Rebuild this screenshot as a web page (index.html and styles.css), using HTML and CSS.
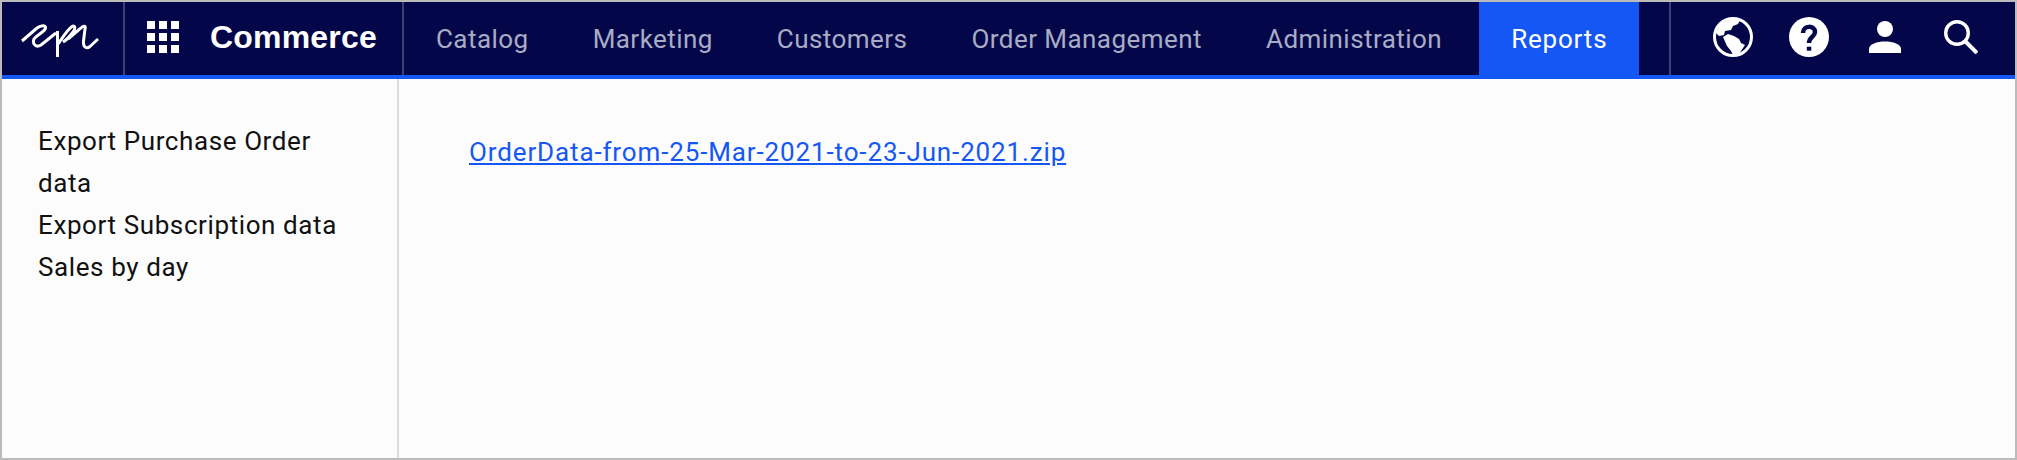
FILE: index.html
```html
<!DOCTYPE html>
<html lang="en">
<head>
    <meta charset="UTF-8">
    <title>Commerce - Reports</title>
    <link rel="stylesheet" href="styles.css">
</head>
<body>
    <div class="frame">
        <header class="topbar">
            <a class="logo-cell" href="#">
                <svg width="78" height="34" viewBox="0 0 78 34">
                    <path d="M1 17 L16 4 C20 1 25 1 24.5 4 C24 8 15 11 13 15 C11 20 15 24 20 21 L35 9 M36.5 7 V33 M37 20 C42 13 47 5 51 2.5 C54 1 55 4 52 8 C49 12 46 16 42 18 M47 15 L60 4 C63 1 65 2 64 5 L62.5 17 C62 24 66 25 69 22.5 L77 15" fill="none" stroke="#fff" stroke-width="3"/>
                </svg>
            </a>
            <div class="app-cell">
                <div class="app-grid">
                    <span></span><span></span><span></span>
                    <span></span><span></span><span></span>
                    <span></span><span></span><span></span>
                </div>
                <span class="app-name">Commerce</span>
            </div>
            <nav class="main-nav">
                <a href="#">Catalog</a>
                <a href="#">Marketing</a>
                <a href="#">Customers</a>
                <a href="#">Order Management</a>
                <a href="#">Administration</a>
                <a href="#" class="active">Reports</a>
            </nav>
            <div class="tools">
                <a class="tool" href="#">
                    <svg width="40" height="40" viewBox="0 0 40 40">
                        <circle cx="20" cy="20" r="18.5" fill="none" stroke="#fff" stroke-width="3"/>
                        <path d="M3 16 L7 7 L18 2 L27 3 L25 7 L20 9 L18 13 L12 14 L11 18 L6 19 Z" fill="#fff"/>
                        <path d="M10 20 L15 17 L21 19 L26 22 L28 26 L32 28 L28 34 L26 37 L20 38 L18 34 L14 29 Z" fill="#fff"/>
                    </svg>
                </a>
                <a class="tool" href="#">
                    <svg width="40" height="40" viewBox="0 0 40 40">
                        <circle cx="20" cy="20" r="20" fill="#fff"/>
                        <path d="M14 16 C14 8 26 8 26 15 C26 20 20 20 20 26" fill="none" stroke="#03074a" stroke-width="4.5"/>
                        <rect x="17.8" y="29.7" width="4.5" height="4" fill="#03074a"/>
                    </svg>
                </a>
                <a class="tool" href="#">
                    <svg width="32" height="32" viewBox="0 0 32 32">
                        <circle cx="16" cy="8" r="8" fill="#fff"/>
                        <path d="M0 32 V28 C0 23 8 20.5 16 20.5 C24 20.5 32 23 32 28 V32 Z" fill="#fff"/>
                    </svg>
                </a>
                <a class="tool" href="#">
                    <svg width="34" height="34" viewBox="0 0 34 34">
                        <circle cx="13" cy="13" r="11.3" fill="none" stroke="#fff" stroke-width="3.4"/>
                        <path d="M21 21 L33 33" fill="none" stroke="#fff" stroke-width="4"/>
                    </svg>
                </a>
            </div>
        </header>
        <div class="content">
            <aside class="sidebar">
                <a href="#">Export Purchase Order data</a>
                <a href="#">Export Subscription data</a>
                <a href="#">Sales by day</a>
            </aside>
            <main class="main">
                <a class="file-link" href="#">OrderData-from-25-Mar-2021-to-23-Jun-2021.zip</a>
            </main>
        </div>
    </div>
</body>
</html>
```

FILE: styles.css
```css
html, body {
    height: 100%;
}
body {
    margin: 0;
    font-family: 'Roboto', sans-serif;
    background-color: #fcfcfc;
}
a {
    text-decoration: none;
    color: inherit;
}
.frame {
    height: 100%;
    box-sizing: border-box;
    border: 2px solid #bbb;
    display: flex;
    flex-direction: column;
}
.topbar {
    height: 73px;
    flex: none;
    display: flex;
    background-color: #03074a;
    border-bottom: 4px solid #1557f5;
    box-sizing: content-box;
}
.logo-cell {
    width: 123px;
    box-sizing: border-box;
    border-right: 2px solid #3b3f72;
    display: flex;
    align-items: center;
    padding: 5px 0 0 19px;
}
.app-cell {
    width: 279px;
    box-sizing: border-box;
    border-right: 2px solid #3b3f72;
    display: flex;
    align-items: center;
    padding: 0 0 3px 22px;
    gap: 31px;
}
.app-grid {
    display: grid;
    grid-template-columns: repeat(3, 8px);
    grid-auto-rows: 8px;
    gap: 4px;
}
.app-grid span {
    background-color: #fff;
}
.app-name {
    font-family: 'Liberation Sans', sans-serif;
    font-size: 32px;
    font-weight: 700;
    color: #fff;
    letter-spacing: 0.2px;
}
.main-nav {
    width: 1267px;
    box-sizing: border-box;
    border-right: 2px solid #3b3f72;
    display: flex;
}
.main-nav a {
    display: flex;
    align-items: center;
    padding: 0 32px;
    font-size: 26px;
    letter-spacing: 0.45px;
    color: #a9acc4;
}
.main-nav a.active {
    margin-left: 5px;
    background-color: #1557f5;
    color: #fff;
    letter-spacing: 0.8px;
}
.tools {
    flex: 1;
    display: flex;
    padding: 0 0 3px 24px;
}
.tool {
    width: 76px;
    display: flex;
    align-items: center;
    justify-content: center;
}
.content {
    flex: 1;
    display: flex;
}
.sidebar {
    width: 397px;
    box-sizing: border-box;
    border-right: 2px solid #ddd;
    padding: 41px 36px 0;
    display: flex;
    flex-direction: column;
    font-size: 26px;
    letter-spacing: 0.6px;
    line-height: 42px;
    color: #111;
}
.main {
    flex: 1;
    padding: 52px 70px;
    font-size: 26px;
    letter-spacing: 0.87px;
    line-height: 42px;
}
.file-link {
    color: #1557f5;
    text-decoration: underline;
}
```
